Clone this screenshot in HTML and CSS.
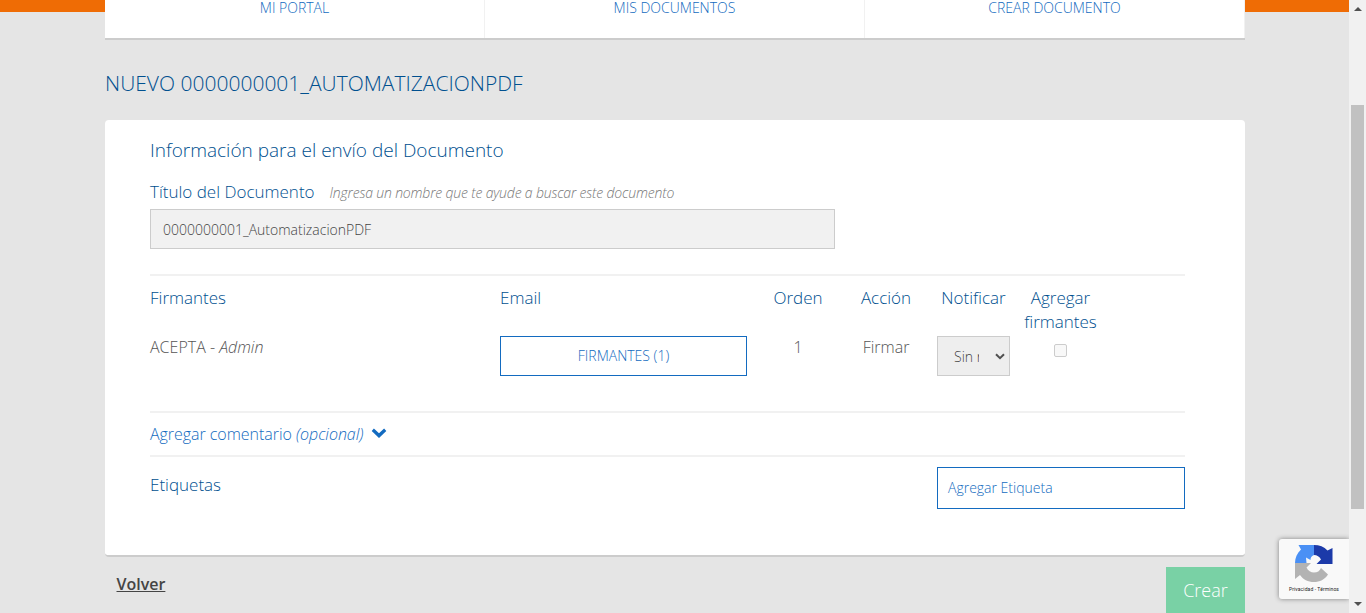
FILE: index.html
```html
<!DOCTYPE html>
<html lang="es">
<head>
<meta charset="utf-8">
<title>Nuevo documento</title>
<link rel="stylesheet" href="styles.css">
</head>
<body>
<div class="page">
  <div class="viewport">
    <div class="topbar"></div>
    <div class="column">
      <nav class="tabs">
        <a class="tab">MI PORTAL</a>
        <a class="tab">MIS DOCUMENTOS</a>
        <a class="tab">CREAR DOCUMENTO</a>
      </nav>
      <h1 class="heading">NUEVO 0000000001_AUTOMATIZACIONPDF</h1>
      <main class="card">
        <h2 class="card-title">Información para el envío del Documento</h2>
        <div class="title-row">
          <label class="label title-label" for="title">Título del Documento</label>
          <em class="hint">Ingresa un nombre que te ayude a buscar este documento</em>
        </div>
        <input class="title-input" id="title" value="0000000001_AutomatizacionPDF" readonly>
        <section class="signers">
          <div class="label">Firmantes</div>
          <div class="label">Email</div>
          <div class="label center">Orden</div>
          <div class="label center">Acción</div>
          <div class="label center">Notificar</div>
          <div class="label center">Agregar<br>firmantes</div>
          <div class="value">ACEPTA - <em>Admin</em></div>
          <button class="signers-button">FIRMANTES (1)</button>
          <div class="value center">1</div>
          <div class="value center">Firmar</div>
          <div class="select">
            <span class="select-text">Sin notificar</span>
            <svg class="select-arrow" width="10" height="7" viewBox="0 0 10 7"><path d="M1 1.2 5 5.2 9 1.2" fill="none" stroke="#505050" stroke-width="2"/></svg>
          </div>
          <div class="check-cell"><span class="checkbox"></span></div>
        </section>
        <div class="comment">
          <span class="comment-text">Agregar comentario <em>(opcional)</em></span>
          <svg width="16" height="11" viewBox="0 0 16 11"><path d="M2.9.6 8 5.3 13.1.6 15.3 3 8 10 .7 3Z" fill="#136bc0"/></svg>
        </div>
        <div class="tags">
          <div class="label tags-label">Etiquetas</div>
          <div class="tag-input">Agregar Etiqueta</div>
        </div>
      </main>
      <div class="actions">
        <a class="back">Volver</a>
        <button class="create">Crear</button>
      </div>
    </div>
    <aside class="recaptcha">
      <svg width="40" height="39" viewBox="0 0 40 39">
        <path d="M20 1v10c-3 1-3.500 3-3.500 5L12 13.500 12.500 19H1C1 14 3 9 7 5.500L4.500 1Z" fill="#4a90f5"/>
        <path d="M20 1c5.500 0 10 1.800 13.500 5.500L38.500 4v16H22.500L27 15.500C25.500 12.500 23 11 20 11Z" fill="#1c3aa9"/>
        <path d="M1 19h16l-4.500 4.500c1.500 3.500 4.500 5 7.500 5 3.500 0 5.500-1.500 7-4.500l7 6.500C31 35.500 25.500 38 20 38 14 38 9 35.500 6 31L1 35Z" fill="#b3b3b3"/>
      </svg>
      <span class="recaptcha-text">Privacidad - Términos</span>
    </aside>
  </div>
  <div class="scrollbar">
    <svg class="scroll-up" width="8" height="4" viewBox="0 0 8 4"><path d="M0 4 4 0 8 4Z" fill="#505050"/></svg>
    <div class="thumb"></div>
    <svg class="scroll-down" width="8" height="4" viewBox="0 0 8 4"><path d="M0 0H8L4 4Z" fill="#505050"/></svg>
  </div>
</div>
</body>
</html>
```
FILE: styles.css
```css
* { box-sizing: border-box; }
body {
  margin: 0;
  background: #e5e5e5;
  font-family: "Open Sans", sans-serif;
  font-weight: 300;
  font-size: 16px;
  line-height: 24px;
  color: #555;
}
.page { display: flex; height: 613px; overflow: hidden; }
.viewport { position: relative; flex: 1; overflow: hidden; }
.topbar { height: 12px; background: #ef6c05; }
.column { position: relative; width: 1140px; margin: -12px 0 0 105px; }

.tabs { display: grid; grid-template-columns: repeat(3, 1fr); height: 40px; background: #fff; border-bottom: 2px solid #ccc; }
.tab { border-right: 1px solid #f1f1f1; text-align: center; font-size: 14px; line-height: 15px; color: #136bc0; }

.heading { margin: 0; height: 80px; padding-top: 31px; font-size: 21px; line-height: 25px; font-weight: 300; color: #00508f; white-space: nowrap; }

.card { height: 437px; padding: 18px 60px 0 45px; background: #fff; border-bottom: 2px solid #ccc; border-radius: 4px; }
.card-title { margin: 0; font-size: 19px; line-height: 24px; font-weight: 300; color: #00508f; }
.label { font-size: 17px; color: #00508f; white-space: nowrap; }
.title-row { display: flex; gap: 15px; height: 26px; margin-top: 18px; }
.hint { font-size: 14px; line-height: 26px; letter-spacing: -0.18px; color: #777; }
.title-input { display: block; width: 685px; height: 40px; margin-top: 3px; padding: 0 12px; border: 1px solid #ccc; background: #f1f1f1; font: inherit; font-size: 14px; color: #444; outline: 0; }

.signers {
  display: grid;
  grid-template-columns: 350px 247px 102px 74px 14px 73px 14px 74px;
  grid-template-rows: 50px 40px;
  height: 139px;
  margin-top: 25px;
  padding-top: 10px;
  border-top: 2px solid #f1f1f1;
  border-bottom: 2px solid #f1f1f1;
}
.center { text-align: center; }
.signers > :nth-child(6n + 5) { grid-column: 6; }
.signers > :nth-child(6n) { grid-column: 8; margin: 0 -9px 0 -10px; }
.value { line-height: 22px; color: #555; }
.signers-button { padding: 0; border: 1px solid #136bc0; background: #fff; font: inherit; font-size: 14px; color: #136bc0; }
.select { display: flex; align-items: center; border: 1px solid #ccc; background: #eee; padding: 0 4px 0 16px; justify-content: space-between; font-size: 14px; }
.select-text { width: 25px; padding-top: 2px; overflow: hidden; white-space: nowrap; color: #444; }
.check-cell { display: flex; justify-content: center; padding-top: 8px; }
.checkbox { width: 13px; height: 13px; border: 1px solid #ccc; border-radius: 2px; background: #f8f8f8; }

.comment { display: flex; align-items: center; gap: 8px; height: 44px; border-bottom: 2px solid #f1f1f1; color: #136bc0; }
.comment-text { letter-spacing: -0.04px; }
.comment svg { margin-bottom: 1px; }
.tags { display: flex; justify-content: space-between; padding-top: 10px; }
.tags-label { padding-top: 6px; }
.tag-input { width: 248px; height: 42px; border: 1px solid #136bc0; padding: 0 10px; font-size: 14px; line-height: 40px; color: #136bc0; }

.actions { display: flex; justify-content: space-between; padding: 10px 0 0 11.5px; }
.back { padding-top: 5px; font-weight: 600; color: #444; text-decoration: underline; }
.create { width: 79px; height: 46px; padding: 0; border: 0; background: #79d1a5; color: #fff; font: inherit; font-size: 18px; }

.recaptcha { position: absolute; right: 0; bottom: 14px; width: 70px; height: 60px; padding-top: 5px; background: #f9f9f9; border-radius: 3px 0 0 3px; box-shadow: 0 0 5px #808080; display: flex; flex-direction: column; align-items: center; }
.recaptcha-text { font: 400 5px/12px Roboto, sans-serif; letter-spacing: 0.1px; color: #222; white-space: nowrap; }

.scrollbar { width: 17px; padding: 7px 2px 7px; background: #f1f1f1; display: flex; flex-direction: column; align-items: center; }
.thumb { width: 13px; height: 404px; margin: 94px 0 auto; background: #c1c1c1; }
```
